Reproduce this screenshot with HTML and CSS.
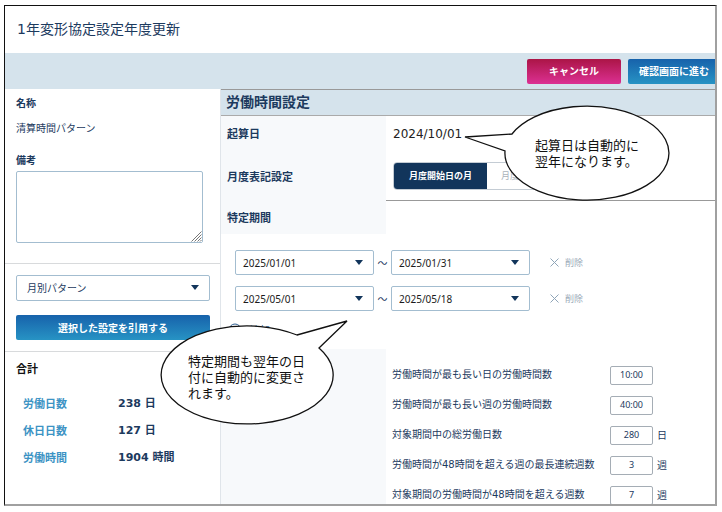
FILE: index.html
```
<!DOCTYPE html>
<html lang="ja">
<head>
<meta charset="utf-8">
<title>1年変形協定設定年度更新</title>
<link rel="stylesheet" href="styles.css">
</head>
<body>
<div class="frame">
  <header class="title-bar"><h1>1年変形協定設定年度更新</h1></header>
  <div class="toolbar">
    <button type="button" class="btn btn-cancel">キャンセル</button>
    <button type="button" class="btn btn-primary btn-next">確認画面に進む</button>
  </div>
  <div class="columns">
    <aside class="sidebar">
      <section class="side-block profile">
        <h2 class="side-label">名称</h2>
        <p class="pattern-name">清算時間パターン</p>
        <label class="side-label note-label" for="note">備考</label>
        <div class="note-wrap">
          <textarea id="note" class="note"></textarea>
          <svg class="grip" viewBox="0 0 11 11" aria-hidden="true"><path d="M0.5 10.5L10.5 0.5M3.5 10.5L10.5 3.5M6.5 10.5L10.5 6.5M9 10.5L10.5 9"/></svg>
        </div>
      </section>
      <section class="side-block quote">
        <div class="select select-pattern">
          <select aria-label="パターン"><option>月別パターン</option></select>
        </div>
        <button type="button" class="btn btn-primary">選択した設定を引用する</button>
      </section>
      <section class="totals">
        <h2>合計</h2>
        <dl>
          <dt>労働日数</dt><dd>238 日</dd>
          <dt>休日日数</dt><dd>127 日</dd>
          <dt>労働時間</dt><dd>1904 時間</dd>
        </dl>
      </section>
    </aside>
    <main class="main">
      <h2 class="section-title">労働時間設定</h2>
      <div class="settings">
        <div class="name">起算日</div>
        <div class="value start-date">2024/10/01</div>
        <div class="name name-tall">月度表記設定</div>
        <div class="value value-line">
          <div class="toggle">
            <button type="button" class="on">月度開始日の月</button><button type="button">月度終了日の月</button>
          </div>
        </div>
        <div class="name name-last">特定期間</div>
      </div>
      <div class="periods">
        <div class="period">
          <div class="select"><select aria-label="期間1 開始"><option>2025/01/01</option></select></div>
          <span class="tilde">～</span>
          <div class="select"><select aria-label="期間1 終了"><option>2025/01/31</option></select></div>
          <button type="button" class="remove"><svg viewBox="0 0 9 9" aria-hidden="true"><path d="M0.5 0.5L8.5 8.5M8.5 0.5L0.5 8.5"/></svg>削除</button>
        </div>
        <div class="period">
          <div class="select"><select aria-label="期間2 開始"><option>2025/05/01</option></select></div>
          <span class="tilde">～</span>
          <div class="select"><select aria-label="期間2 終了"><option>2025/05/18</option></select></div>
          <button type="button" class="remove"><svg viewBox="0 0 9 9" aria-hidden="true"><path d="M0.5 0.5L8.5 8.5M8.5 0.5L0.5 8.5"/></svg>削除</button>
        </div>
        <button type="button" class="add"><svg viewBox="0 0 14 14" aria-hidden="true"><path d="M7 1a6 6 0 1 0 0 12a6 6 0 1 0 0-12M7 4v6M4 7h6"/></svg>追加</button>
      </div>
      <div class="limits">
        <div class="limits-name"></div>
        <div class="limits-list">
          <div class="limit"><label for="l1">労働時間が最も長い日の労働時間数</label><input id="l1" value="10:00"></div>
          <div class="limit"><label for="l2">労働時間が最も長い週の労働時間数</label><input id="l2" value="40:00"></div>
          <div class="limit"><label for="l3">対象期間中の総労働日数</label><input id="l3" value="280"><span>日</span></div>
          <div class="limit"><label for="l4">労働時間が48時間を超える週の最長連続週数</label><input id="l4" value="3"><span>週</span></div>
          <div class="limit"><label for="l5">対象期間の労働時間が48時間を超える週数</label><input id="l5" value="7"><span>週</span></div>
        </div>
      </div>
    </main>
  </div>
  <div class="bubble bubble-date">
    <svg viewBox="0 0 206 96" aria-hidden="true"><path d="M48 29A82 47 0 1 1 41 46L1 32Z"/></svg>
    <p>起算日は自動的に<br>翌年になります。</p>
  </div>
  <div class="bubble bubble-period">
    <svg viewBox="0 0 188 104" aria-hidden="true"><path d="M137 15L187 1L159 28A86 49 0 1 1 137 15Z"/></svg>
    <p>特定期間も翌年の日<br>付に自動的に変更さ<br>れます。</p>
  </div>
</div>
</body>
</html>
```
FILE: styles.css
```
* { box-sizing: border-box; }

body {
  margin: 0;
  padding: 5px 5px 6px 4px;
  height: 100vh;
  background: #fff;
  color: #1c3a5e;
  font: 10px/20px "Noto Sans", "Noto Sans CJK JP", sans-serif;
}

h1, h2, p, dl, dd { margin: 0; }
button, select, input, textarea { font: inherit; color: inherit; }
button { padding: 0; border: 0; background: none; }

.frame {
  position: relative;
  display: flex;
  flex-direction: column;
  height: 100%;
  overflow: hidden;
  border: 1px solid #111;
  border-right: 2px solid #a0a0a0;
  border-bottom: 2px solid #a0a0a0;
}

.title-bar {
  flex: none;
  display: flex;
  align-items: center;
  height: 47px;
  padding: 0 12px 2px;
}
.title-bar h1 {
  font-family: "DejaVu Sans", "Noto Sans CJK JP", sans-serif;
  font-size: 14px;
  font-weight: 400;
}

.toolbar {
  flex: none;
  display: flex;
  justify-content: flex-end;
  align-items: center;
  gap: 7px;
  height: 36px;
  background: #d5e3ec;
}

.btn {
  height: 25px;
  border-radius: 2px;
  color: #fff;
  font-weight: 700;
  white-space: nowrap;
}
.btn-cancel { width: 94px; background: linear-gradient(#ab1546, #dc3093); }
.btn-primary { background: linear-gradient(#1762ab, #2793c4); }
.btn-next { padding: 0 11px; margin-right: -5px; }

.columns {
  flex: 1;
  min-height: 0;
  display: grid;
  grid-template-columns: 216px minmax(0, 1fr);
}

.sidebar { border-right: 1px solid #e0e5ea; }
.side-block { padding: 0 10px 0 11px; border-bottom: 1px solid #d8dadc; }
.side-label { display: block; font-size: 10px; font-weight: 700; }
.profile { padding-top: 4px; padding-bottom: 20px; }
.pattern-name { margin: 5px 0 12px; }
.note-wrap { position: relative; margin: 1px 7px 0 0; }
.note {
  display: block;
  width: 100%;
  height: 72px;
  border: 1px solid #a3bdd0;
  border-radius: 2px;
  resize: none;
}
.grip {
  position: absolute;
  right: 1px;
  bottom: 1px;
  width: 11px;
  height: 11px;
  background: #fff;
  fill: none;
  stroke: #777;
}

.quote {
  display: flex;
  flex-direction: column;
  gap: 14px;
  padding-top: 11px;
  padding-bottom: 11px;
}

.select { position: relative; width: 139px; height: 25px; color: #1b1b1b; }
.select select {
  width: 100%;
  height: 100%;
  padding: 0 7px;
  border: 1px solid #a3bdd0;
  border-radius: 2px;
  background: #fff;
  appearance: none;
}
.select::after {
  content: "";
  position: absolute;
  right: 11px;
  top: 10px;
  width: 8px;
  height: 5px;
  background: #12355b;
  clip-path: polygon(0 0, 100% 0, 50% 100%);
  pointer-events: none;
}
.select-pattern { width: 100%; height: 26px; color: #1c3a5e; }
.select-pattern select { padding: 0 10px; }

.totals { padding: 7px 11px; }
.totals h2 { font-size: 11px; color: #111; }
.totals dl {
  display: grid;
  grid-template-columns: 95px 1fr;
  margin: 11px 0 0 7px;
  font-size: 11px;
  font-weight: 700;
  line-height: 27px;
}
.totals dt { color: #3c93c4; }
.totals dd { font-family: "DejaVu Sans", "Noto Sans CJK JP", sans-serif; }

.section-title {
  height: 27px;
  padding: 0 5px;
  border-top: 1px solid #999;
  border-bottom: 1px solid #aaa;
  background: #d5e3ec;
  font-size: 14px;
  line-height: 24px;
}

.settings {
  display: grid;
  grid-template-columns: 165px minmax(0, 1fr);
  grid-template-rows: 36px 49px 33px;
}
.name {
  display: flex;
  align-items: center;
  padding: 0 6px;
  background: #f7f9fb;
  font-size: 11px;
  font-weight: 700;
}
.value { display: flex; align-items: center; padding-left: 7px; }
.start-date { color: #222; font-size: 12px; font-family: "DejaVu Sans", sans-serif; }
.value-line { border-bottom: 1px solid #999; }

.toggle {
  display: flex;
  height: 28px;
  border: 1px solid #c4ccd4;
  border-radius: 4px;
  overflow: hidden;
}
.toggle button { padding: 0 14px; color: #aab2ba; font-size: 9px; }
.toggle .on { padding: 0 15px; background: #12355b; color: #fff; font-weight: 700; }

.periods {
  display: grid;
  gap: 11px;
  height: 115px;
  padding: 16px 0 0 14px;
  align-content: start;
}
.period { display: flex; align-items: center; }
.tilde { width: 17px; text-align: center; }
.remove {
  display: flex;
  align-items: center;
  gap: 6px;
  margin-left: 20px;
  color: #9aaab8;
  font-size: 9px;
}
.remove svg { width: 9px; height: 9px; fill: none; stroke: #8fa5b8; }
.add {
  display: flex;
  align-items: center;
  gap: 8px;
  justify-self: start;
  margin-left: -7px;
  color: #2f5f92;
  line-height: 16px;
}
.add svg { width: 14px; height: 14px; fill: none; stroke: currentColor; }

.limits { display: grid; grid-template-columns: 165px minmax(0, 1fr); }
.limits-name { background: #f7f9fb; }
.limits-list { padding: 11px 0 0 6px; }
.limit {
  display: grid;
  grid-template-columns: 218px 43px 1fr;
  align-items: center;
  height: 30px;
}
.limit label {
  font-family: "DejaVu Sans", "Noto Sans CJK JP", sans-serif;
  white-space: nowrap;
}
.limit input {
  width: 100%;
  height: 19px;
  padding: 0;
  border: 1px solid #a5adb5;
  border-radius: 2px;
  font-size: 9px;
  text-align: center;
}
.limit span { padding-left: 4px; }

.bubble { position: absolute; color: #111; font-size: 13px; line-height: 16px; }
.bubble svg { display: block; width: 100%; fill: #fff; stroke: #111; stroke-width: 1.3; overflow: visible; }
.bubble p { position: absolute; white-space: nowrap; }
.bubble-date { left: 459px; top: 99px; width: 206px; }
.bubble-date p { left: 71px; top: 32px; }
.bubble-period { left: 155px; top: 314px; width: 188px; }
.bubble-period p { left: 28px; top: 33px; }
```
